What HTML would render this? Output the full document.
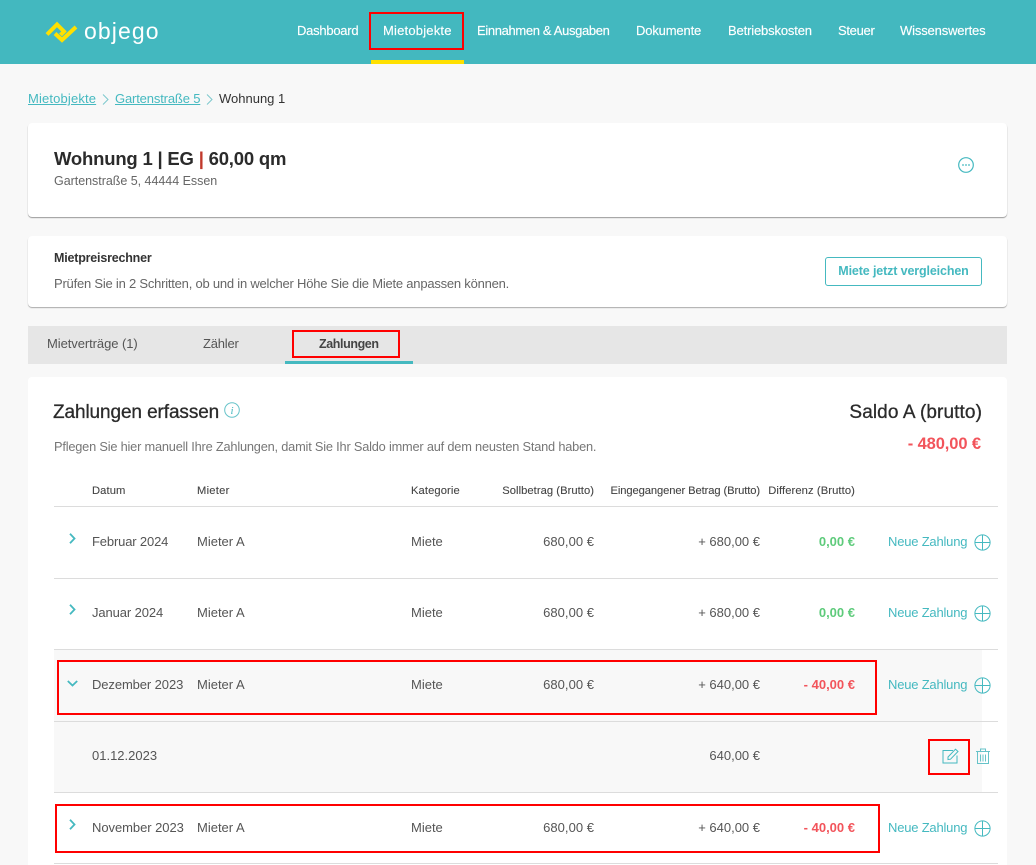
<!DOCTYPE html>
<html lang="de"><head><meta charset="utf-8"><title>objego</title>
<style>
html,body{margin:0;padding:0}
body{width:1036px;height:865px;overflow:hidden;background:#f8f8f8;position:relative;font-family:"Liberation Sans",sans-serif;color:#555;font-size:13px}
.a{position:absolute;white-space:nowrap;line-height:18px}
.r{position:absolute;white-space:nowrap;line-height:18px;text-align:right}
.box{position:absolute;box-sizing:border-box}
.red{position:absolute;box-sizing:border-box;border:2px solid #f00}
.line{position:absolute;left:54px;width:944px;height:1px;background:#dcdcdc}
.nav{position:absolute;top:22px;color:#fff;font-size:13px;line-height:18px;white-space:nowrap;letter-spacing:-.15px;-webkit-text-stroke:.15px #fff}
.t{color:#45b9c0}
svg{position:absolute;overflow:visible}
.g{color:#5ecb7b;font-weight:bold;font-size:13px}
.n{color:#f2545b;font-weight:bold;font-size:13px}
.th{font-size:11.200px;color:#444;-webkit-text-stroke:.1px #444}
</style></head><body>
<div class="box" style="left:0;top:0;width:1036px;height:64px;background:#43b8bf"></div>
<svg style="left:44px;top:20px" width="36" height="24" viewBox="0 0 36 24"><path d="M3 14.500L13 4.500L20 11.500L16.500 15" fill="none" stroke="#ffe000" stroke-width="4"/><path d="M11 13.500L18 20L32 7" fill="none" stroke="#ffe000" stroke-width="4"/></svg>
<div class="a" style="left:84px;top:16px;font-size:23px;line-height:30px;color:#fff;letter-spacing:1.1px">objego</div>
<div class="nav" style="left:297px;letter-spacing:-.25px">Dashboard</div>
<div class="nav" style="left:383px;letter-spacing:.2px">Mietobjekte</div>
<div class="nav" style="left:477px;letter-spacing:-.35px">Einnahmen &amp; Ausgaben</div>
<div class="nav" style="left:636px">Dokumente</div>
<div class="nav" style="left:728px">Betriebskosten</div>
<div class="nav" style="left:838px;letter-spacing:-.3px">Steuer</div>
<div class="nav" style="left:900px">Wissenswertes</div>
<div class="box" style="left:371px;top:60px;width:93px;height:4px;background:#ffe000"></div>
<div class="red" style="left:369px;top:12px;width:95px;height:38px"></div>

<div class="a t" style="left:28px;top:90px;text-decoration:underline;letter-spacing:.15px">Mietobjekte</div>
<svg style="left:102px;top:94px" width="7" height="11"><path d="M1 .5L6 5.500L1 10.500" fill="none" stroke="#7cc8cd" stroke-width="1"/></svg>
<div class="a t" style="left:115px;top:90px;text-decoration:underline;letter-spacing:-.15px">Gartenstraße 5</div>
<svg style="left:206px;top:94px" width="7" height="11"><path d="M1 .5L6 5.500L1 10.500" fill="none" stroke="#7cc8cd" stroke-width="1"/></svg>
<div class="a" style="left:219px;top:90px;color:#333;letter-spacing:0">Wohnung 1</div>

<div class="box" style="left:28px;top:123px;width:979px;height:94px;background:#fff;border-radius:4px;box-shadow:0 1px 1px #999"></div>
<div class="a" style="left:54px;top:147px;font-size:18.500px;line-height:24px;font-weight:bold;color:#2b2b2b;letter-spacing:-.2px">Wohnung 1 | EG <span style="color:#c0392b">|</span> 60,00 qm</div>
<div class="a" style="left:54px;top:172px;font-size:12.500px;color:#666;letter-spacing:-.03px">Gartenstraße 5, 44444 Essen</div>
<svg style="left:958px;top:157px" width="16" height="16"><circle cx="8" cy="8" r="7.300" fill="none" stroke="#45b9c0" stroke-width="1.200"/><circle cx="5" cy="8" r=".9" fill="#45b9c0"/><circle cx="8" cy="8" r=".9" fill="#45b9c0"/><circle cx="11" cy="8" r=".9" fill="#45b9c0"/></svg>

<div class="box" style="left:28px;top:236px;width:979px;height:71px;background:#fff;border-radius:4px;box-shadow:0 1px 1px #aaa"></div>
<div class="a" style="left:54px;top:249px;font-weight:bold;font-size:12.500px;color:#333;letter-spacing:-.2px">Mietpreisrechner</div>
<div class="a" style="left:54px;top:275px;font-size:13px;color:#666;letter-spacing:-.22px">Prüfen Sie in 2 Schritten, ob und in welcher Höhe Sie die Miete anpassen können.</div>
<div class="box t" style="left:825px;top:257px;width:157px;height:29px;border:1px solid #45b9c0;border-radius:3px;background:#fff;font-weight:bold;font-size:12.500px;line-height:27px;text-align:center;white-space:nowrap;letter-spacing:-.13px">Miete jetzt vergleichen</div>

<div class="box" style="left:28px;top:326px;width:979px;height:38px;background:#e6e6e6"></div>
<div class="a" style="left:47px;top:335px;color:#555;letter-spacing:-.07px">Mietverträge (1)</div>
<div class="a" style="left:203px;top:335px;color:#555;letter-spacing:-.2px">Zähler</div>
<div class="a" style="left:319px;top:335px;color:#444;font-weight:bold;font-size:12.500px;letter-spacing:-.4px">Zahlungen</div>
<div class="box" style="left:285px;top:361px;width:128px;height:3px;background:#45b9c0"></div>
<div class="red" style="left:292px;top:330px;width:108px;height:28px"></div>

<div class="box" style="left:28px;top:377px;width:979px;height:488px;background:#fff;border-radius:4px 4px 0 0"></div>
<div class="a" style="left:53px;top:400px;font-size:19px;line-height:26px;color:#2b2b2b;letter-spacing:-.1px;-webkit-text-stroke:.3px #2b2b2b">Zahlungen erfassen</div>
<svg style="left:224px;top:402px" width="16" height="16"><circle cx="8" cy="8" r="7.300" fill="none" stroke="#66c3c9"/><text x="8" y="12" font-family="Liberation Serif" font-style="italic" font-size="11" fill="#45b9c0" text-anchor="middle">i</text></svg>
<div class="r" style="right:54px;top:400px;font-size:19px;line-height:26px;color:#2b2b2b;letter-spacing:.1px;-webkit-text-stroke:.3px #2b2b2b">Saldo A (brutto)</div>
<div class="r n" style="right:55px;top:433px;font-size:16.500px;line-height:22px;letter-spacing:-.1px">- 480,00 €</div>
<div class="a" style="left:54px;top:438px;font-size:12.800px;color:#777;letter-spacing:-.2px">Pflegen Sie hier manuell Ihre Zahlungen, damit Sie Ihr Saldo immer auf dem neusten Stand haben.</div>

<div class="a th" style="left:92px;top:482px;letter-spacing:.1px">Datum</div>
<div class="a th" style="left:197px;top:482px;letter-spacing:.25px">Mieter</div>
<div class="a th" style="left:411px;top:482px;letter-spacing:.1px">Kategorie</div>
<div class="r th" style="right:442px;top:482px;letter-spacing:.05px">Sollbetrag (Brutto)</div>
<div class="r th" style="right:276px;top:482px;letter-spacing:-.1px">Eingegangener Betrag (Brutto)</div>
<div class="r th" style="right:181px;top:482px;letter-spacing:.1px">Differenz (Brutto)</div>

<div class="box" style="left:54px;top:649px;width:928px;height:143px;background:#f8f8f8"></div>
<div class="line" style="top:506px"></div>
<div class="line" style="top:578px"></div>
<div class="line" style="top:649px"></div>
<div class="line" style="top:721px"></div>
<div class="line" style="top:792px"></div>
<div class="line" style="top:863px"></div>

<!-- Row 1 -->
<svg style="left:69px;top:533px" width="7" height="11"><path d="M1 .8L5.500 5.500L1 10.200" fill="none" stroke="#45b9c0" stroke-width="1.800"/></svg>
<div class="a" style="left:92px;top:533px;letter-spacing:-.15px">Februar 2024</div>
<div class="a" style="left:197px;top:533px;letter-spacing:0">Mieter A</div>
<div class="a" style="left:411px;top:533px;letter-spacing:0">Miete</div>
<div class="r" style="right:442px;top:533px;letter-spacing:.03px">680,00 €</div>
<div class="r" style="right:276px;top:533px">+ 680,00 €</div>
<div class="r g" style="right:181px;top:533px">0,00 €</div>
<div class="a t" style="left:888px;top:533px;letter-spacing:-.2px">Neue Zahlung</div>
<svg style="left:974px;top:534px" width="17" height="17"><circle cx="8.500" cy="8.500" r="7.600" fill="none" stroke="#45b9c0"/><path d="M8.500 1V16M1 8.500H16" stroke="#45b9c0"/></svg>

<!-- Row 2 -->
<svg style="left:69px;top:604px" width="7" height="11"><path d="M1 .8L5.500 5.500L1 10.200" fill="none" stroke="#45b9c0" stroke-width="1.800"/></svg>
<div class="a" style="left:92px;top:604px;letter-spacing:-.1px">Januar 2024</div>
<div class="a" style="left:197px;top:604px;letter-spacing:0">Mieter A</div>
<div class="a" style="left:411px;top:604px;letter-spacing:0">Miete</div>
<div class="r" style="right:442px;top:604px;letter-spacing:.03px">680,00 €</div>
<div class="r" style="right:276px;top:604px">+ 680,00 €</div>
<div class="r g" style="right:181px;top:604px">0,00 €</div>
<div class="a t" style="left:888px;top:604px;letter-spacing:-.2px">Neue Zahlung</div>
<svg style="left:974px;top:605px" width="17" height="17"><circle cx="8.500" cy="8.500" r="7.600" fill="none" stroke="#45b9c0"/><path d="M8.500 1V16M1 8.500H16" stroke="#45b9c0"/></svg>

<!-- Row 3 -->
<svg style="left:67px;top:680px" width="11" height="7"><path d="M.8 1L5.500 5.500L10.200 1" fill="none" stroke="#45b9c0" stroke-width="1.800"/></svg>
<div class="a" style="left:92px;top:676px;letter-spacing:-.1px">Dezember 2023</div>
<div class="a" style="left:197px;top:676px;letter-spacing:0">Mieter A</div>
<div class="a" style="left:411px;top:676px;letter-spacing:0">Miete</div>
<div class="r" style="right:442px;top:676px;letter-spacing:.03px">680,00 €</div>
<div class="r" style="right:276px;top:676px">+ 640,00 €</div>
<div class="r n" style="right:181px;top:676px">- 40,00 €</div>
<div class="a t" style="left:888px;top:676px;letter-spacing:-.2px">Neue Zahlung</div>
<svg style="left:974px;top:677px" width="17" height="17"><circle cx="8.500" cy="8.500" r="7.600" fill="none" stroke="#45b9c0"/><path d="M8.500 1V16M1 8.500H16" stroke="#45b9c0"/></svg>
<div class="red" style="left:57px;top:660px;width:820px;height:55px"></div>

<!-- Sub row -->
<div class="a" style="left:92px;top:747px">01.12.2023</div>
<div class="r" style="right:276px;top:747px">640,00 €</div>
<svg style="left:942px;top:748px" width="18" height="16"><path d="M11 2.500H1V15H15V7.500" fill="none" stroke="#45b9c0"/><path d="M6 9L13.500 1.200L16 3.500L8.500 11.200L6 11.500Z" fill="none" stroke="#45b9c0"/></svg>
<svg style="left:975px;top:748px" width="16" height="17"><path d="M1 3.500H15M5.500 3.500V1H10.500V3.500M2.500 3.500V15.500H13.500V3.500M5.500 6.500V13.500M8 6.500V13.500M10.500 6.500V13.500" fill="none" stroke="#66c3c9"/></svg>
<div class="red" style="left:928px;top:739px;width:42px;height:36px"></div>

<!-- Row 4 -->
<svg style="left:69px;top:819px" width="7" height="11"><path d="M1 .8L5.500 5.500L1 10.200" fill="none" stroke="#45b9c0" stroke-width="1.800"/></svg>
<div class="a" style="left:92px;top:819px;letter-spacing:-.05px">November 2023</div>
<div class="a" style="left:197px;top:819px;letter-spacing:0">Mieter A</div>
<div class="a" style="left:411px;top:819px;letter-spacing:0">Miete</div>
<div class="r" style="right:442px;top:819px;letter-spacing:.03px">680,00 €</div>
<div class="r" style="right:276px;top:819px">+ 640,00 €</div>
<div class="r n" style="right:181px;top:819px">- 40,00 €</div>
<div class="a t" style="left:888px;top:819px;letter-spacing:-.2px">Neue Zahlung</div>
<svg style="left:974px;top:820px" width="17" height="17"><circle cx="8.500" cy="8.500" r="7.600" fill="none" stroke="#45b9c0"/><path d="M8.500 1V16M1 8.500H16" stroke="#45b9c0"/></svg>
<div class="red" style="left:55px;top:804px;width:825px;height:49px"></div>
</body></html>
